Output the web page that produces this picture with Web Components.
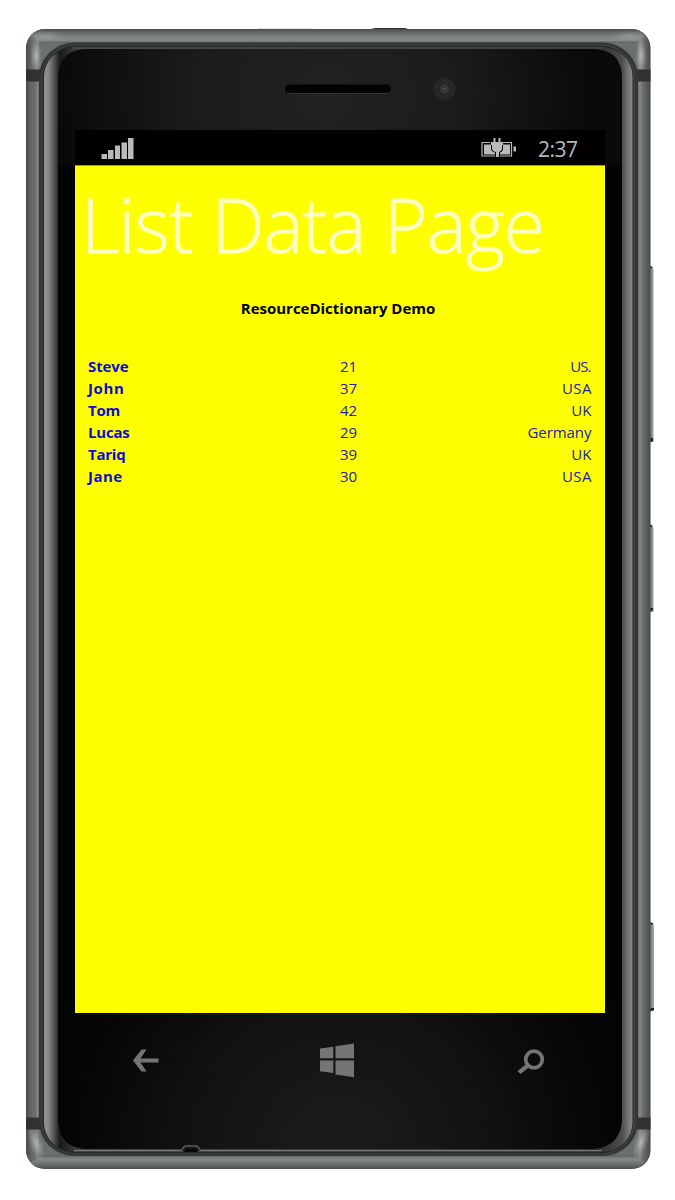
<!DOCTYPE html>
<html lang="en">
<head>
<meta charset="utf-8">
<title>List Data Page</title>
<style>
html,body{margin:0;background:#fff;width:675px;height:1200px;overflow:hidden;font-family:"Open Sans","Noto Sans",sans-serif}
</style>
</head>
<body>
<phone-device>
  <status-bar time="2:37"></status-bar>
  <list-page></list-page>
  <nav-keys slot="keys"></nav-keys>
</phone-device>
<script>
const mount=(el,html)=>{el.attachShadow({mode:'open'}).innerHTML=html;};

// Text line whose tracking is adjusted to span a given width.
customElements.define('fit-text',class extends HTMLElement{
  connectedCallback(){
    if(this.shadowRoot)return;
    mount(this,`<style>:host{display:block;white-space:pre}span{display:inline-block}</style><span></span>`);
    const s=this.shadowRoot.querySelector('span'),t=this.getAttribute('text');
    s.textContent=t;
    const target=+this.getAttribute('span');
    if(target){
      const d=(target-s.getBoundingClientRect().width)/t.length;
      s.style.letterSpacing=d+'px';
      s.style.marginRight=(-d)+'px';
    }
  }
});

customElements.define('phone-body',class extends HTMLElement{
  connectedCallback(){mount(this,`
<style>:host{display:block}svg{display:block}</style>
<svg width="675" height="1200" viewBox="0 0 675 1200">
<defs>
<linearGradient id="l"><stop offset="0" stop-color="#484b4a"/><stop offset=".2" stop-color="#555958"/><stop offset=".45" stop-color="#666a68"/><stop offset=".75" stop-color="#6c706e"/><stop offset=".9" stop-color="#858987"/><stop offset="1" stop-color="#666"/></linearGradient>
<linearGradient id="r"><stop offset="0" stop-color="#6b6d6c"/><stop offset=".15" stop-color="#858887"/><stop offset=".45" stop-color="#666a69"/><stop offset=".8" stop-color="#535756"/><stop offset="1" stop-color="#454847"/></linearGradient>
<linearGradient id="t" x2="0" y2="1"><stop offset="0" stop-color="#4a4e4d"/><stop offset=".25" stop-color="#646967"/><stop offset=".55" stop-color="#7d8280"/><stop offset=".8" stop-color="#878c8a"/><stop offset="1" stop-color="#5b5f5d"/></linearGradient>
<linearGradient id="b" x2="0" y2="1"><stop offset="0" stop-color="#5c605e"/><stop offset=".3" stop-color="#858a88"/><stop offset=".65" stop-color="#6b706e"/><stop offset="1" stop-color="#484c4b"/></linearGradient>
<linearGradient id="gl" gradientUnits="userSpaceOnUse" x1="44" x2="632"><stop offset="0" stop-color="#949494"/><stop offset=".008" stop-color="#868686"/><stop offset=".018" stop-color="#4c4c4c"/><stop offset=".027" stop-color="#1a1a1a"/><stop offset=".06" stop-color="#444"/><stop offset=".95" stop-color="#333"/><stop offset=".983" stop-color="#4c4c4c"/><stop offset=".994" stop-color="#767676"/><stop offset="1" stop-color="#858585"/></linearGradient>
<radialGradient id="top" gradientUnits="userSpaceOnUse" cx="325" cy="95" r="270"><stop offset="0" stop-color="#222"/><stop offset=".5" stop-color="#1b1b1b"/><stop offset="1" stop-color="#090909"/></radialGradient>
<radialGradient id="bot" gradientUnits="userSpaceOnUse" cx="338" cy="1155" r="280"><stop offset="0" stop-color="#1c1c1c"/><stop offset=".5" stop-color="#131313"/><stop offset="1" stop-color="#040404"/></radialGradient>
<radialGradient id="shine"><stop offset="0" stop-color="#c5cac8" stop-opacity=".75"/><stop offset="1" stop-color="#aaa" stop-opacity="0"/></radialGradient>
<radialGradient id="cam"><stop offset="0" stop-color="#777"/><stop offset=".12" stop-color="#33343a"/><stop offset=".3" stop-color="#3c3c3c"/><stop offset=".45" stop-color="#252525"/><stop offset=".75" stop-color="#2a2a2a"/><stop offset="1" stop-color="#202020"/></radialGradient>
<linearGradient id="btn"><stop offset="0" stop-color="#555"/><stop offset=".5" stop-color="#858585"/><stop offset="1" stop-color="#aaa"/></linearGradient>
<clipPath id="case"><rect x="26" y="29" width="624.5" height="1140" rx="19"/></clipPath>
</defs>
<path d="M369 31q2-3 7-3h28q4 0 6 3z" fill="#303030"/><path d="M258 29.200h55" stroke="#888" stroke-width=".8"/>
<g fill="url(#btn)"><path d="M649 266h3q1.500 1 1.500 4v172h-4.500zM649 525h3q1.500 1 1.500 4v83h-4.500zM649 923h3q2 1 2 4v84h-5z"/></g>
<g fill="#222"><path d="M649 266l3 1v1h-3zM649 438h4v3l-4 2zM649 524l3 1v2h-3zM649 608h4v2l-4 2zM649 922l4 1v1.500h-4zM649 1008h5v2l-5 2z"/></g>
<g clip-path="url(#case)">
<rect x="26" y="29" width="625" height="1140" fill="#6b706e"/>
<rect x="26" y="29" width="13" height="1140" fill="url(#l)"/>
<rect x="638" y="29" width="12.500" height="1140" fill="url(#r)"/>
<path d="M26 29H650.500L636 43H40z" fill="url(#t)"/>
<path d="M26 1169H650.500L636 1155H40z" fill="url(#b)"/>
<g fill="url(#shine)"><ellipse cx="36" cy="56" rx="6" ry="19"/><ellipse cx="641" cy="56" rx="6" ry="19"/><ellipse cx="45" cy="36" rx="20" ry="6" opacity=".5"/><ellipse cx="631" cy="36" rx="20" ry="6" opacity=".5"/><ellipse cx="36" cy="1143" rx="7" ry="19" transform="rotate(-18 36 1143)"/><ellipse cx="641" cy="1142" rx="7" ry="19" transform="rotate(18 641 1142)"/></g>
<path d="M26 69.500h14v12H26zM636 69.500h15v12h-15zM26 1117.500h14v12H26zM636 1117.500h15v12h-15z" fill="#303231"/>
</g>
<rect x="39" y="42.500" width="599" height="1113.500" rx="35" fill="#333635"/>
<rect x="41.500" y="44.800" width="593.500" height="1109" rx="33" fill="#424544"/>
<rect x="42.500" y="45.800" width="591" height="1107.500" rx="32" fill="#262827"/>
<rect x="44" y="47.500" width="588.500" height="1104" rx="29" fill="url(#gl)"/>
<path d="M72 47.900H604" stroke="#555" stroke-width="1"/>
<path d="M74 1150.600H602" stroke="#777" stroke-width="1.100"/>
<path d="M90 48.900H588C612 48.900 622 58 622 80V1116C622 1138 611 1149 588 1149H90C67 1149 58 1139 58 1114V82C58 59 67 48.900 90 48.900z" fill="#030303"/>
<path d="M58 165V82C58 59 67 48.900 90 48.900H588C612 48.900 622 58 622 80V165z" fill="url(#top)"/>
<path d="M58 1000V1114C58 1139 67 1149 90 1149H588C611 1149 622 1138 622 1116V1000z" fill="url(#bot)"/>
<path d="M181 1151l3-4q1-1 3-1h8q2 0 3 1l3 4" fill="#161616" stroke="#5d5d5d" stroke-width="1.500"/><path d="M184 1152l2-3h10l2 3z" fill="#050505"/>
<rect x="285" y="84.500" width="106" height="9.500" rx="4.500" fill="#030303"/><path d="M287 92q1 1.500 3 1.500h96q3 0 4-2" fill="none" stroke="#444" stroke-width=".8"/>
<circle cx="444.500" cy="89" r="11.500" fill="url(#cam)"/>
</svg>`)}
});

customElements.define('phone-device',class extends HTMLElement{
  connectedCallback(){mount(this,`
<style>
:host{display:grid;width:675px;height:1200px}
phone-body,.face{grid-area:1/1}
.face{z-index:1;display:grid;grid-template:883.400px 1fr/530px;padding:130px 70px 0 75px}
.screen{display:flex;flex-direction:column;background:#ff0;overflow:hidden;height:883px}
</style>
<phone-body></phone-body>
<div class="face"><div class="screen"><slot></slot></div><slot name="keys"></slot></div>`)}
});

customElements.define('status-bar',class extends HTMLElement{
  connectedCallback(){mount(this,`
<style>
:host{display:flex;height:35px;flex:none;background:#000;border-bottom:1px solid #a0a000;align-items:center;color:#b8b8b8;padding:0 27px 0 26px}
svg{display:block;fill:#bababa}.sp{flex:1}
fit-text{font:400 21px/36px "Open Sans",sans-serif;margin-left:21px;width:40px;padding-top:2px}
</style>
<svg width="34" height="35"><path d="M0.500 24h5.500v5h-5.500zM7 20h5.500v9H7zM14 15.500h5v13.500h-5zM20.500 12.500H26V29h-5.500zM27 8h5.500v21H27z"/></svg>
<div class="sp"></div>
<svg width="36" height="35" viewBox="0 0 36 35"><path d="M9 12.500H1v13.500h13M22 12.500h8.500v13.500H19" fill="none" stroke="#bababa" stroke-width="1.200"/><path d="M3 14.500h7v4q0 3 4 4v2H3zM22 14.500h7v10H19v-2q3-1 3-4zM32.500 16.500H35v5h-2.500zM12.500 8H14.500v4h3V8h2v4h2.500v3h-1v4q-1 3-3 3v5h-3v-5q-3 0-4-3v-4h-1v-3h2.500z"/></svg>
<fit-text text="${this.getAttribute('time')}" span="39.500"></fit-text>`)}
});

customElements.define('list-page',class extends HTMLElement{
  connectedCallback(){
    const rows=[['Steve',40.500,'21','US.',20.500],['John',36.500,'37','USA',30],['Tom',32,'42','UK',20.500],['Lucas',41.500,'29','Germany',64],['Tariq',37.500,'39','UK',20.500],['Jane',34.500,'30','USA',30]];
    mount(this,`
<style>
:host{display:flex;flex-direction:column;padding:0 13px;flex:1}
.title{font-size:75px;font-weight:300;line-height:104px;color:#ffffc4;-webkit-text-stroke:.8px #ffffc4;margin:6px 0 0 -7px}
.sub{font-size:15px;font-weight:700;line-height:22px;color:#000;align-self:center;margin:21px 4px 36px 0}
ul{list-style:none;margin:0;padding:0}
</style>
<fit-text class="title" text="List Data Page" span="463"></fit-text>
<fit-text class="sub" text="ResourceDictionary Demo" span="194.500"></fit-text>
<ul>${rows.map(r=>`<li><person-row name="${r[0]}" nw="${r[1]}" age="${r[2]}" country="${r[3]}" cw="${r[4]}"></person-row></li>`).join('')}</ul>`)}
});

customElements.define('person-row',class extends HTMLElement{
  connectedCallback(){
    const a=n=>this.getAttribute(n);
    mount(this,`
<style>
:host{display:grid;grid-template-columns:252px 1fr auto;height:22px;line-height:22px;font-size:15px;color:#2222a8;padding-right:.5px}
.n{font-weight:700;color:#0c0cd8}
</style>
<fit-text class="n" text="${a('name')}" span="${a('nw')}"></fit-text>
<fit-text text="${a('age')}" span="17"></fit-text>
<fit-text text="${a('country')}" span="${a('cw')}"></fit-text>`)}
});

customElements.define('nav-keys',class extends HTMLElement{
  connectedCallback(){mount(this,`
<style>
:host{display:flex;align-items:flex-start;padding:28px 0 0 57px}
svg{display:block;fill:#757575;flex:none}
svg+svg{margin-left:157px}svg:last-of-type{margin-left:161.500px}
</style>
<svg width="28" height="40"><path d="M1 19.500L9.500 8.500h5L8.500 17.500H26.500v4H8.500l6 9h-5z"/></svg>
<svg width="38" height="40"><path d="M3 7.500L16.300 5.700V17.200H3zM18.500 5.300L37 2.500V17.200H18.500zM3 19.500H16.300V32L3 30.200zM18.500 19.500H37V36.300L18.500 33.500z"/></svg>
<svg width="28" height="40"><circle cx="17" cy="18.500" r="8.300" fill="none" stroke="#757575" stroke-width="3.700"/><path d="M10 22.500L0.500 30l3 3L13 25.500z"/></svg>`)}
});
</script>
</body>
</html>
